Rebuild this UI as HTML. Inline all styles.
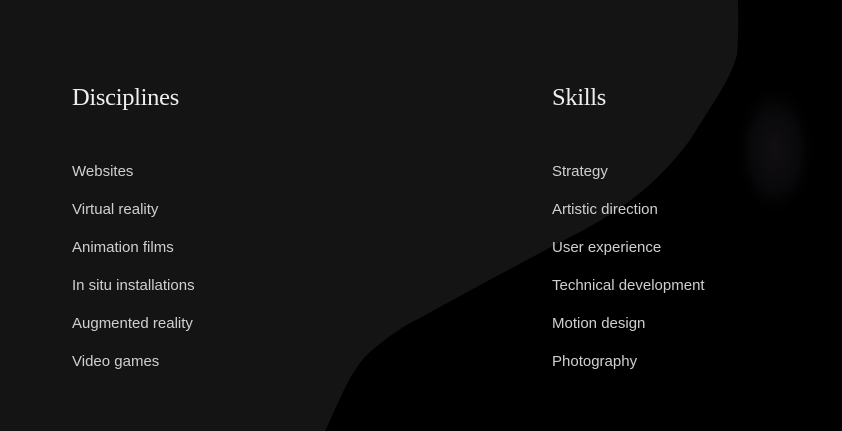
<!DOCTYPE html>
<html><head><style>
html,body{margin:0;padding:0;}
body{width:842px;height:431px;overflow:hidden;background:#141414;position:relative;font-family:"Liberation Sans",sans-serif;}
svg{position:absolute;left:0;top:0;}
h2{position:absolute;margin:0;font-family:"Liberation Serif",serif;font-weight:normal;font-size:24.5px;color:#eee;top:84px;letter-spacing:-0.3px;}
ul{position:absolute;margin:0;padding:0;list-style:none;top:161px;}
li{font-size:15px;color:#cfcfcf;height:38px;line-height:21px;}
</style></head><body>
<svg width="842" height="431">
<defs><radialGradient id="g" cx="50%" cy="50%" r="50%"><stop offset="0" stop-color="#110f12"/><stop offset="0.6" stop-color="#080709"/><stop offset="1" stop-color="#000" stop-opacity="0"/></radialGradient></defs>
<path d="M738 0 L842 0 L842 431 L325 431 C340 400 350 370 370 352 C390 335 405 325 420 318 C480 285 530 258 580 232 C630 205 660 180 690 140 C715 100 730 80 737 55 C739 30 738 10 738 0 Z" fill="#000"/>
<ellipse cx="775" cy="150" rx="42" ry="70" fill="url(#g)"/>
</svg>
<h2 style="left:72px">Disciplines</h2>
<h2 style="left:552px">Skills</h2>
<ul style="left:72px"><li>Websites</li><li>Virtual reality</li><li>Animation films</li><li>In situ installations</li><li>Augmented reality</li><li>Video games</li></ul>
<ul style="left:552px"><li>Strategy</li><li>Artistic direction</li><li>User experience</li><li>Technical development</li><li>Motion design</li><li>Photography</li></ul>
</body></html>
